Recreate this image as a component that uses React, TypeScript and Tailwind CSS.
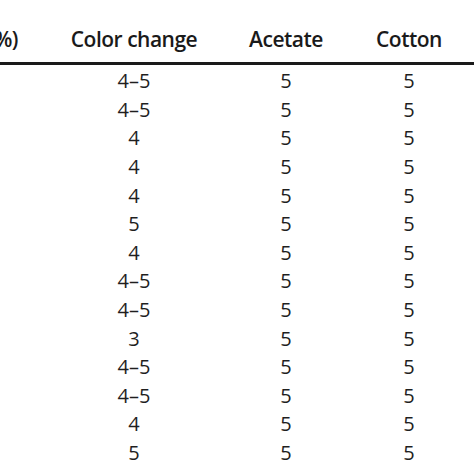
const rows = ['4–5', '4–5', '4', '4', '4', '5', '4', '4–5', '4–5', '3', '4–5', '4–5', '4', '5'];

const cols = 'grid grid-cols-[158px_152px_152px_94px_18px]';

const App = () => {
  return (
    <div className="w-[474px] h-[474px] overflow-hidden bg-white text-[#1f1f1f] font-['Open_Sans',sans-serif]">
      <div className="-ml-[100px] w-[574px]">
        {/* Header */}
        <div className={`${cols} pt-[24.5px] h-[62px] text-[21px] leading-[28px] font-semibold tracking-[-0.5px] text-[#1a1a1a]`}>
          <div className="flex justify-end pr-[40px] whitespace-nowrap overflow-hidden">
            <span>Concentration (%)</span>
          </div>
          <div className="text-center">Color change</div>
          <div className="text-center">Acetate</div>
          <div className="text-center">Cotton</div>
          <div />
        </div>
        <div className="h-[2.5px] bg-[#1a1a1a]" />

        {/* Rows */}
        <div className="pt-[2.7px] text-[20px] leading-[28.6px]">
          {rows.map((r, i) => (
            <div key={i} className={`${cols} h-[28.6px]`}>
              <div />
              <div className="text-center">{r}</div>
              <div className="text-center">5</div>
              <div className="text-center">5</div>
              <div />
            </div>
          ))}
        </div>
      </div>
    </div>
  );
};

export default App;
